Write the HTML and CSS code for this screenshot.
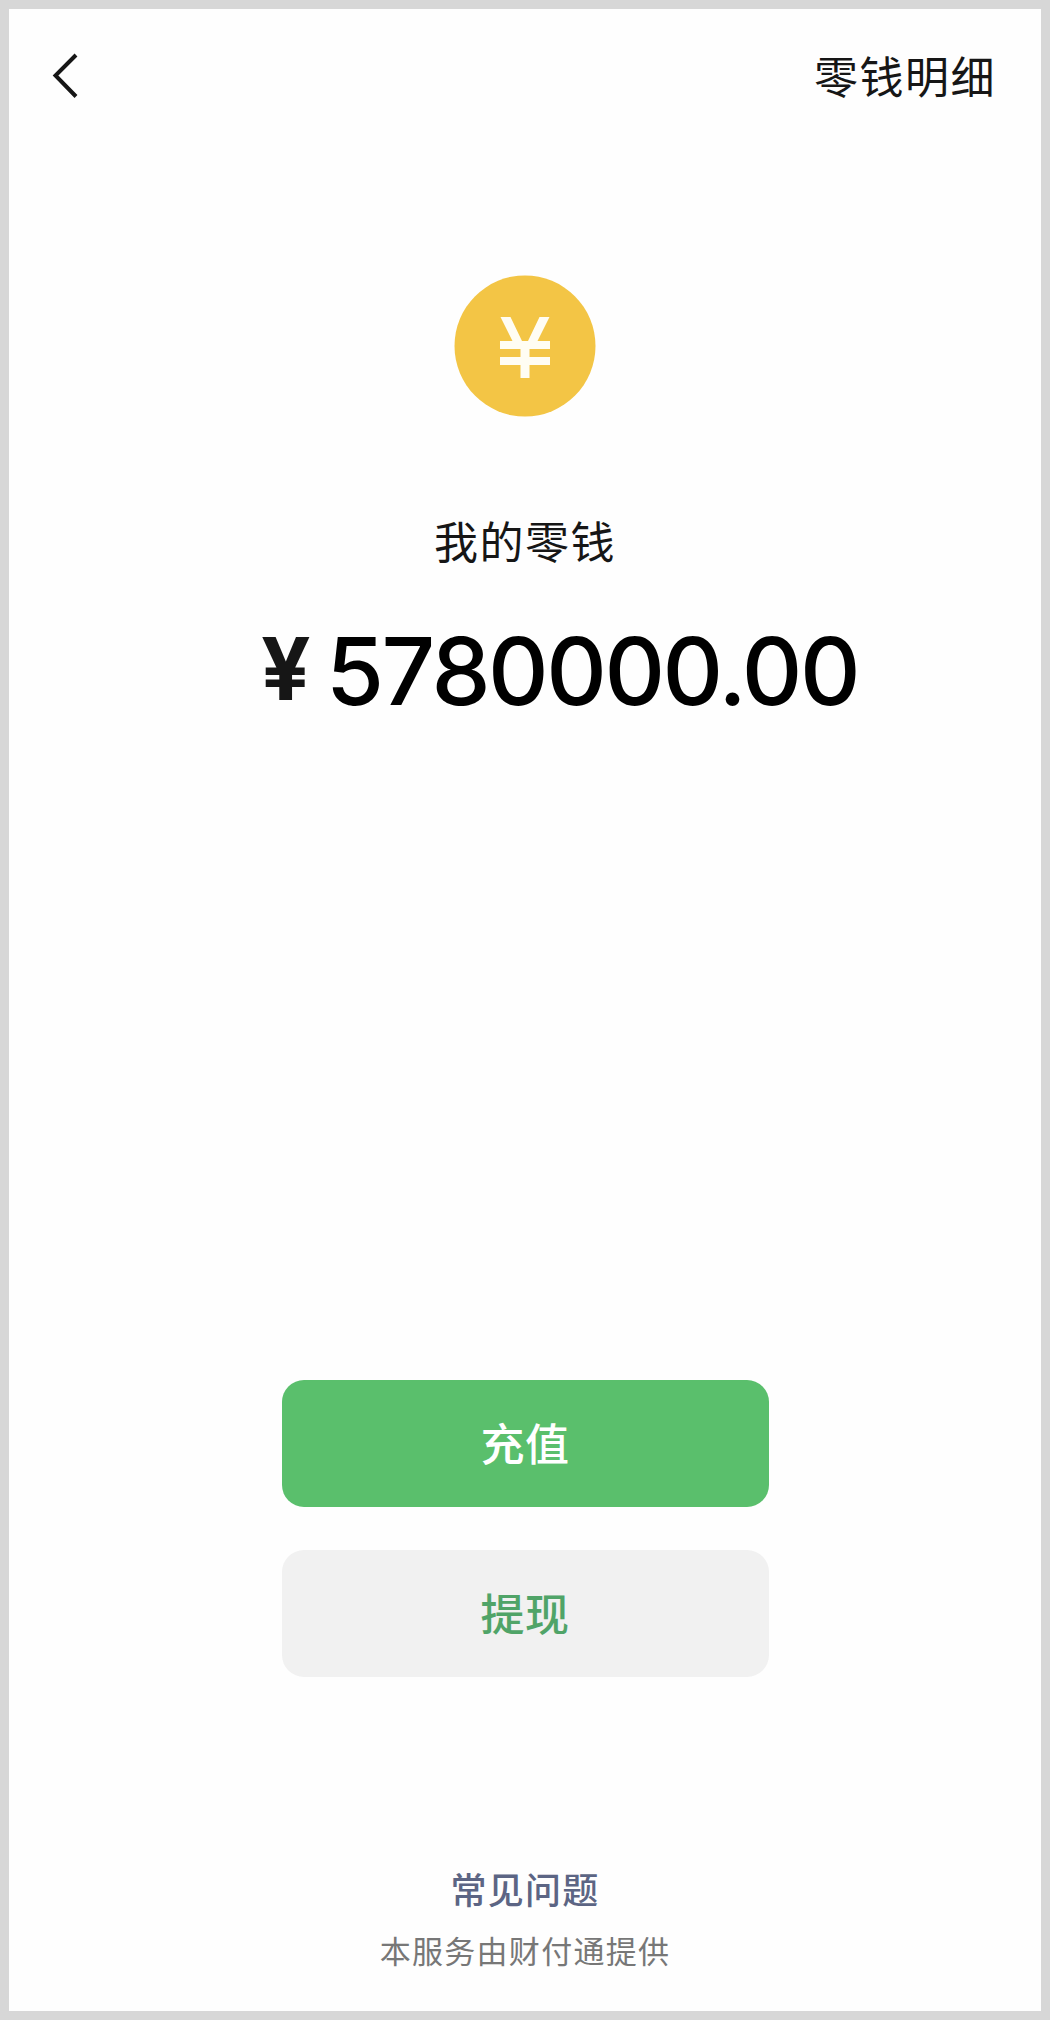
FILE: index.html
```html
<!DOCTYPE html>
<html lang="zh-CN">
<head>
  <meta charset="UTF-8">
  <meta name="viewport" content="width=device-width, initial-scale=1">
  <title>我的零钱</title>
  <link rel="stylesheet" href="styles.css">
</head>
<body>

<div class="page">
  <header>
    <a href="#" class="back" title="返回">
      <svg width="26" height="46" viewBox="0 0 26 46">
        <path d="M24 2 L3.5 22.5 L24 43.5" fill="none" stroke="#161616" stroke-width="4"/>
      </svg>
    </a>
    <a href="#" class="detail">零钱明细</a>
  </header>

  <main>
    <svg class="coin" width="142" height="142" viewBox="0 0 142 142">
      <circle cx="71" cy="71" r="70.5" fill="#f3c545"/>
      <path d="M46.5 42 H56.5 L68 66 H74 L85.5 42 H95.5 L83.5 66 H96 V74 H75.5 V82 H96 V90 H75.5 V103 H66.5 V90 H46 V82 H66.5 V74 H46 V66 H58.5 Z" fill="#fffdf3"/>
    </svg>
    <h1>我的零钱</h1>
    <div class="balance">
      <span class="currency">¥</span>
      <span class="amount">5780000.00</span>
    </div>
  </main>

  <section class="actions">
    <button class="btn btn-primary">充值</button>
    <button class="btn btn-default">提现</button>
  </section>

  <footer>
    <a href="#">常见问题</a>
    <p>本服务由财付通提供</p>
  </footer>
</div>

</body>
</html>
```
FILE: styles.css
```css
* {
  box-sizing: border-box;
}

body {
  margin: 0;
  font-family: "Noto Sans CJK SC", sans-serif;
  color: #161616;
}

a {
  text-decoration: none;
  color: inherit;
}

.page {
  height: 2020px;
  border: 9px solid #d7d7d7;
  background: #fefefe;
  display: flex;
  flex-direction: column;
  align-items: center;
}

header {
  width: 100%;
  height: 136px;
  padding: 34px 45px 0 43px;
  display: flex;
  justify-content: space-between;
  align-items: flex-start;
}

.back {
  margin-top: 10px;
  line-height: 0;
}

.detail {
  font-size: 44px;
  line-height: 64px;
  letter-spacing: 1.5px;
}

main {
  display: flex;
  flex-direction: column;
  align-items: center;
  padding-top: 130px;
}

.coin {
  display: block;
}

h1 {
  margin: 91px 0 0;
  font-size: 44px;
  line-height: 64px;
  font-weight: 400;
  letter-spacing: 1.5px;
}

.balance {
  display: flex;
  margin: 41px 0 0 69px;
  font-family: Inter, sans-serif;
  line-height: 116px;
}

.currency {
  width: 65px;
  font-size: 87px;
  line-height: 112px;
  font-weight: 700;
}

.amount {
  font-size: 94px;
  font-weight: 500;
  letter-spacing: -2.5px;
  color: #000;
}

.actions {
  display: flex;
  flex-direction: column;
  gap: 43px;
  margin-top: auto;
}

.btn {
  width: 487px;
  height: 127px;
  padding: 0 0 3px;
  border: none;
  border-radius: 22px;
  font-family: inherit;
  font-size: 44px;
  font-weight: 500;
  letter-spacing: 0.5px;
}

.btn-primary {
  background: #5abf6c;
  color: #fff;
}

.btn-default {
  background: #f1f1f1;
  color: #50a468;
}

footer {
  margin: 185px 0 39px;
  text-align: center;
}

footer a {
  display: block;
  font-size: 36px;
  line-height: 52px;
  font-weight: 500;
  letter-spacing: 1.3px;
  color: #5c6584;
}

footer p {
  margin: 14px 0 0;
  font-size: 31px;
  line-height: 44px;
  letter-spacing: 1.3px;
  font-weight: 400;
  color: #777;
}
```
